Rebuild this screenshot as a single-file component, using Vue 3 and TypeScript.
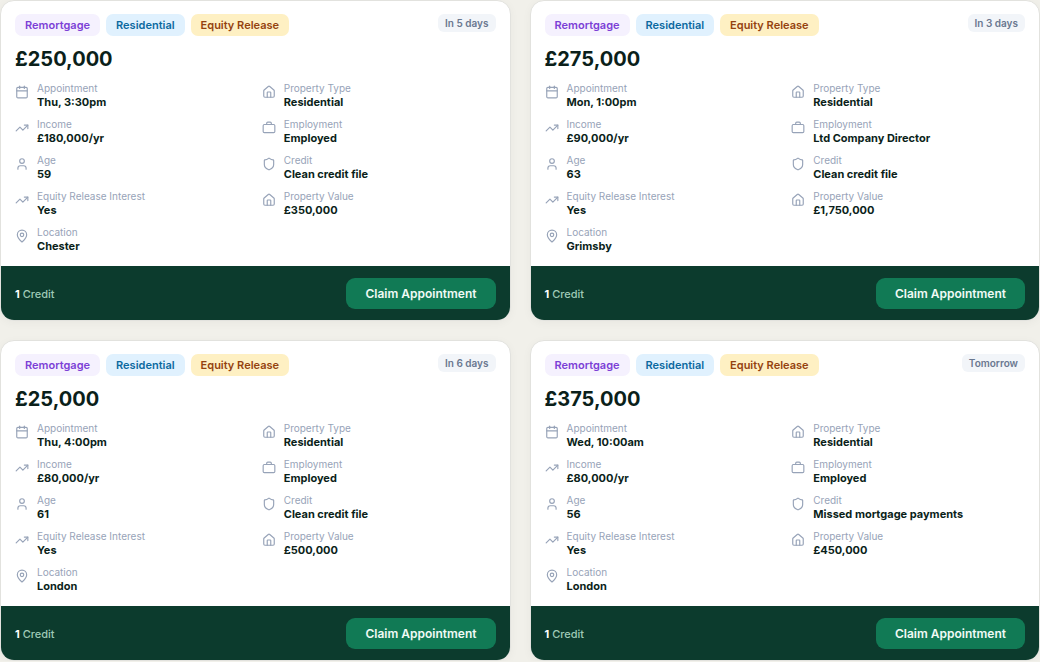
<script setup lang="ts">
type IconName = 'calendar' | 'home' | 'trend' | 'briefcase' | 'user' | 'shield' | 'pin'

interface Field {
  icon: IconName
  label: string
  value: string
}

interface Lead {
  id: number
  due: string
  amount: string
  fields: Field[]
}

const tags = [
  { text: 'Remortgage', tone: 'violet' },
  { text: 'Residential', tone: 'blue' },
  { text: 'Equity Release', tone: 'amber' },
]

const icons: Record<IconName, string[]> = {
  calendar: ['M8 2v4', 'M16 2v4', 'M5 4h14a2 2 0 0 1 2 2v14a2 2 0 0 1-2 2H5a2 2 0 0 1-2-2V6a2 2 0 0 1 2-2z', 'M3 10h18'],
  home: [
    'M15 21v-8a1 1 0 0 0-1-1h-4a1 1 0 0 0-1 1v8',
    'M3 10a2 2 0 0 1 .709-1.528l7-6a2 2 0 0 1 2.582 0l7 6A2 2 0 0 1 21 10v9a2 2 0 0 1-2 2H5a2 2 0 0 1-2-2z',
  ],
  trend: ['M22 7l-8.500 8.500-5-5L2 17', 'M16 7h6v6'],
  briefcase: [
    'M16 6V4a2 2 0 0 0-2-2h-4a2 2 0 0 0-2 2v2',
    'M4 6h16a2 2 0 0 1 2 2v10a2 2 0 0 1-2 2H4a2 2 0 0 1-2-2V8a2 2 0 0 1 2-2z',
  ],
  user: ['M19 21v-2a4 4 0 0 0-4-4H9a4 4 0 0 0-4 4v2', 'M12 3a4 4 0 1 1 0 8a4 4 0 1 1 0-8z'],
  shield: [
    'M20 13c0 5-3.500 7.500-7.660 8.950a1 1 0 0 1-.67-.01C7.500 20.500 4 18 4 13V6a1 1 0 0 1 1-1c2 0 4.500-1.200 6.240-2.720a1.170 1.170 0 0 1 1.520 0C14.510 3.810 17 5 19 5a1 1 0 0 1 1 1z',
  ],
  pin: [
    'M20 10c0 4.993-5.539 10.193-7.399 11.799a1 1 0 0 1-1.202 0C9.539 20.193 4 14.993 4 10a8 8 0 0 1 16 0',
    'M12 7a3 3 0 1 1 0 6a3 3 0 1 1 0-6z',
  ],
}

function lead(
  id: number,
  due: string,
  amount: string,
  appointment: string,
  income: string,
  employment: string,
  age: string,
  credit: string,
  propertyValue: string,
  location: string,
): Lead {
  return {
    id,
    due,
    amount,
    fields: [
      { icon: 'calendar', label: 'Appointment', value: appointment },
      { icon: 'home', label: 'Property Type', value: 'Residential' },
      { icon: 'trend', label: 'Income', value: income },
      { icon: 'briefcase', label: 'Employment', value: employment },
      { icon: 'user', label: 'Age', value: age },
      { icon: 'shield', label: 'Credit', value: credit },
      { icon: 'trend', label: 'Equity Release Interest', value: 'Yes' },
      { icon: 'home', label: 'Property Value', value: propertyValue },
      { icon: 'pin', label: 'Location', value: location },
    ],
  }
}

const leads: Lead[] = [
  lead(1, 'In 5 days', '£250,000', 'Thu, 3:30pm', '£180,000/yr', 'Employed', '59', 'Clean credit file', '£350,000', 'Chester'),
  lead(2, 'In 3 days', '£275,000', 'Mon, 1:00pm', '£90,000/yr', 'Ltd Company Director', '63', 'Clean credit file', '£1,750,000', 'Grimsby'),
  lead(3, 'In 6 days', '£25,000', 'Thu, 4:00pm', '£80,000/yr', 'Employed', '61', 'Clean credit file', '£500,000', 'London'),
  lead(4, 'Tomorrow', '£375,000', 'Wed, 10:00am', '£80,000/yr', 'Employed', '56', 'Missed mortgage payments', '£450,000', 'London'),
]
</script>

<template>
  <main class="board">
    <article v-for="item in leads" :key="item.id" class="card">
      <div class="body">
        <header class="top">
          <div class="tags">
            <span v-for="tag in tags" :key="tag.text" class="tag" :class="tag.tone">{{ tag.text }}</span>
          </div>
          <span class="due">{{ item.due }}</span>
        </header>
        <h2 class="amount">{{ item.amount }}</h2>
        <dl class="fields">
          <div v-for="field in item.fields" :key="field.label" class="field">
            <svg class="icon" viewBox="0 0 24 24" aria-hidden="true">
              <path v-for="d in icons[field.icon]" :key="d" :d="d" />
            </svg>
            <div class="pair">
              <dt>{{ field.label }}</dt>
              <dd>{{ field.value }}</dd>
            </div>
          </div>
        </dl>
      </div>
      <footer class="foot">
        <span class="cost"><strong>1</strong> Credit</span>
        <button type="button" class="claim">Claim Appointment</button>
      </footer>
    </article>
  </main>
</template>

<style>
body {
  margin: 0;
  background: #f1f0ea;
}
</style>

<style scoped>
.board {
  display: grid;
  grid-template-columns: repeat(2, minmax(0, 1fr));
  gap: 19px;
  font-family: Inter, "Liberation Sans", sans-serif;
  color: #0b1f1a;
}

.card {
  display: flex;
  flex-direction: column;
  border: 1px solid #e2e2de;
  border-radius: 14px;
  background: #fff;
  box-shadow: 0 2px 10px rgba(20, 30, 20, 0.04);
  overflow: hidden;
}

.body {
  flex: 1;
  padding: 13px 14px 12px;
}

.top {
  display: flex;
  justify-content: space-between;
  align-items: flex-start;
}

.tags {
  display: flex;
  gap: 6px;
}

.tag {
  padding: 3px 10px;
  border-radius: 7px;
  font-size: 11px;
  line-height: 16px;
  font-weight: 600;
}

.violet {
  background: #f5f1fe;
  color: #7c3fd6;
}

.blue {
  background: #e0f1fe;
  color: #0b69a0;
}

.amber {
  background: #fef0c3;
  color: #94420f;
}

.due {
  padding: 1px 7px;
  border-radius: 6px;
  background: #f2f5f9;
  color: #6a7890;
  font-size: 10px;
  line-height: 16px;
  font-weight: 600;
}

.amount {
  margin: 10px 0 9px;
  font-size: 20px;
  line-height: 27px;
  font-weight: 700;
}

.fields {
  display: grid;
  grid-template-columns: repeat(2, minmax(0, 1fr));
  gap: 8px 13px;
  margin: 0;
}

.field {
  display: flex;
  gap: 8px;
}

.icon {
  flex: none;
  width: 14px;
  height: 14px;
  margin-top: 3px;
  fill: none;
  stroke: #97a3b8;
  stroke-width: 2;
  stroke-linecap: round;
  stroke-linejoin: round;
}

dt {
  color: #97a3b8;
  font-size: 10px;
  line-height: 13px;
}

dd {
  margin: 0;
  font-size: 11px;
  line-height: 15px;
  font-weight: 700;
}

.foot {
  display: flex;
  justify-content: space-between;
  align-items: center;
  padding: 12px 14px 11px;
  background: #0c3b2d;
}

.cost {
  color: #9fc9b6;
  font-size: 11px;
  line-height: 16px;
  font-weight: 500;
}

.cost strong {
  color: #fff;
  font-weight: 700;
}

.claim {
  padding: 8px 19px 7px;
  border: 0;
  border-radius: 9px;
  background: #117a55;
  color: #f0faf5;
  font: inherit;
  font-size: 12px;
  line-height: 16px;
  font-weight: 600;
  cursor: pointer;
}
</style>
